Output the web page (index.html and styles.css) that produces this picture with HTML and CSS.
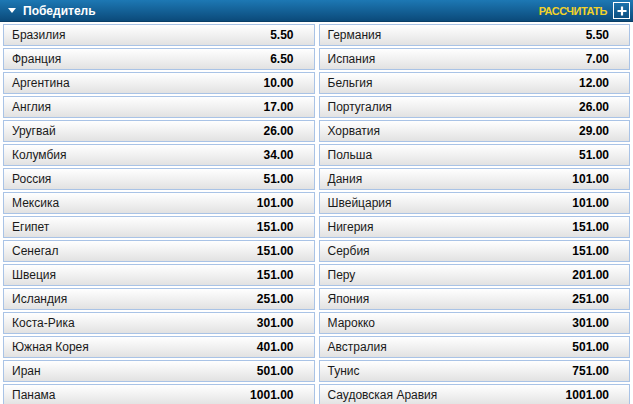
FILE: index.html
```html
<!DOCTYPE html>
<html lang="ru">
<head>
<meta charset="utf-8">
<link rel="stylesheet" href="styles.css">
</head>
<body>
<div class="market">
  <div class="head">
    <div class="title"><span class="tri"></span>Победитель</div>
    <div class="calc">РАССЧИТАТЬ <span class="plus"><svg width="10" height="10" viewBox="0 0 10 10"><path d="M5 0.5V9.5M0.5 5H9.5" stroke="#fff" stroke-width="2.2"/></svg></span></div>
  </div>
  <div class="grid">
    <div class="sel"><span>Бразилия</span><b>5.50</b></div>
    <div class="sel"><span>Германия</span><b>5.50</b></div>
    <div class="sel"><span>Франция</span><b>6.50</b></div>
    <div class="sel"><span>Испания</span><b>7.00</b></div>
    <div class="sel"><span>Аргентина</span><b>10.00</b></div>
    <div class="sel"><span>Бельгия</span><b>12.00</b></div>
    <div class="sel"><span>Англия</span><b>17.00</b></div>
    <div class="sel"><span>Португалия</span><b>26.00</b></div>
    <div class="sel"><span>Уругвай</span><b>26.00</b></div>
    <div class="sel"><span>Хорватия</span><b>29.00</b></div>
    <div class="sel"><span>Колумбия</span><b>34.00</b></div>
    <div class="sel"><span>Польша</span><b>51.00</b></div>
    <div class="sel"><span>Россия</span><b>51.00</b></div>
    <div class="sel"><span>Дания</span><b>101.00</b></div>
    <div class="sel"><span>Мексика</span><b>101.00</b></div>
    <div class="sel"><span>Швейцария</span><b>101.00</b></div>
    <div class="sel"><span>Египет</span><b>151.00</b></div>
    <div class="sel"><span>Нигерия</span><b>151.00</b></div>
    <div class="sel"><span>Сенегал</span><b>151.00</b></div>
    <div class="sel"><span>Сербия</span><b>151.00</b></div>
    <div class="sel"><span>Швеция</span><b>151.00</b></div>
    <div class="sel"><span>Перу</span><b>201.00</b></div>
    <div class="sel"><span>Исландия</span><b>251.00</b></div>
    <div class="sel"><span>Япония</span><b>251.00</b></div>
    <div class="sel"><span>Коста-Рика</span><b>301.00</b></div>
    <div class="sel"><span>Марокко</span><b>301.00</b></div>
    <div class="sel"><span>Южная Корея</span><b>401.00</b></div>
    <div class="sel"><span>Австралия</span><b>501.00</b></div>
    <div class="sel"><span>Иран</span><b>501.00</b></div>
    <div class="sel"><span>Тунис</span><b>751.00</b></div>
    <div class="sel"><span>Панама</span><b>1001.00</b></div>
    <div class="sel"><span>Саудовская Аравия</span><b>1001.00</b></div>
  </div>
</div>
</body>
</html>
```
FILE: styles.css
```css
* { box-sizing: border-box; }
html, body { margin: 0; padding: 0; background: #fff; }
body { font-family: "Liberation Sans", Arial, sans-serif; width: 633px; height: 404px; overflow: hidden; }
.market { width: 633px; }
.head {
  height: 22px;
  display: flex;
  align-items: center;
  justify-content: space-between;
  padding: 0 3px 0 8px;
  background: linear-gradient(#1d78b4, #0b4a7a);
  border-bottom: 1px solid #0a3e66;
}
.title { color: #fff; font-weight: bold; font-size: 12px; display: flex; align-items: center; }
.tri {
  width: 0; height: 0;
  border-left: 4px solid transparent;
  border-right: 4px solid transparent;
  border-top: 5px solid #fff;
  margin-right: 7px;
}
.calc { color: #f2d22a; font-weight: bold; font-size: 11px; letter-spacing: -0.5px; display: flex; align-items: center; gap: 6px; }
.plus {
  width: 17px; height: 17px;
  border: 1px solid #fff;
  display: flex; align-items: center; justify-content: center;
}
.grid {
  display: grid;
  grid-template-columns: 1fr 1fr;
  column-gap: 4px;
  row-gap: 2px;
  padding: 2px 3px 0 3px;
}
.sel {
  height: 22px;
  border: 1px solid #a9c3e6;
  background: linear-gradient(#ffffff, #e2e2e2);
  display: flex;
  align-items: center;
  justify-content: space-between;
  padding: 0 20px 0 8px;
  font-size: 12px;
  color: #1a1a1a;
}
.sel b { font-weight: bold; color: #000; }
```
